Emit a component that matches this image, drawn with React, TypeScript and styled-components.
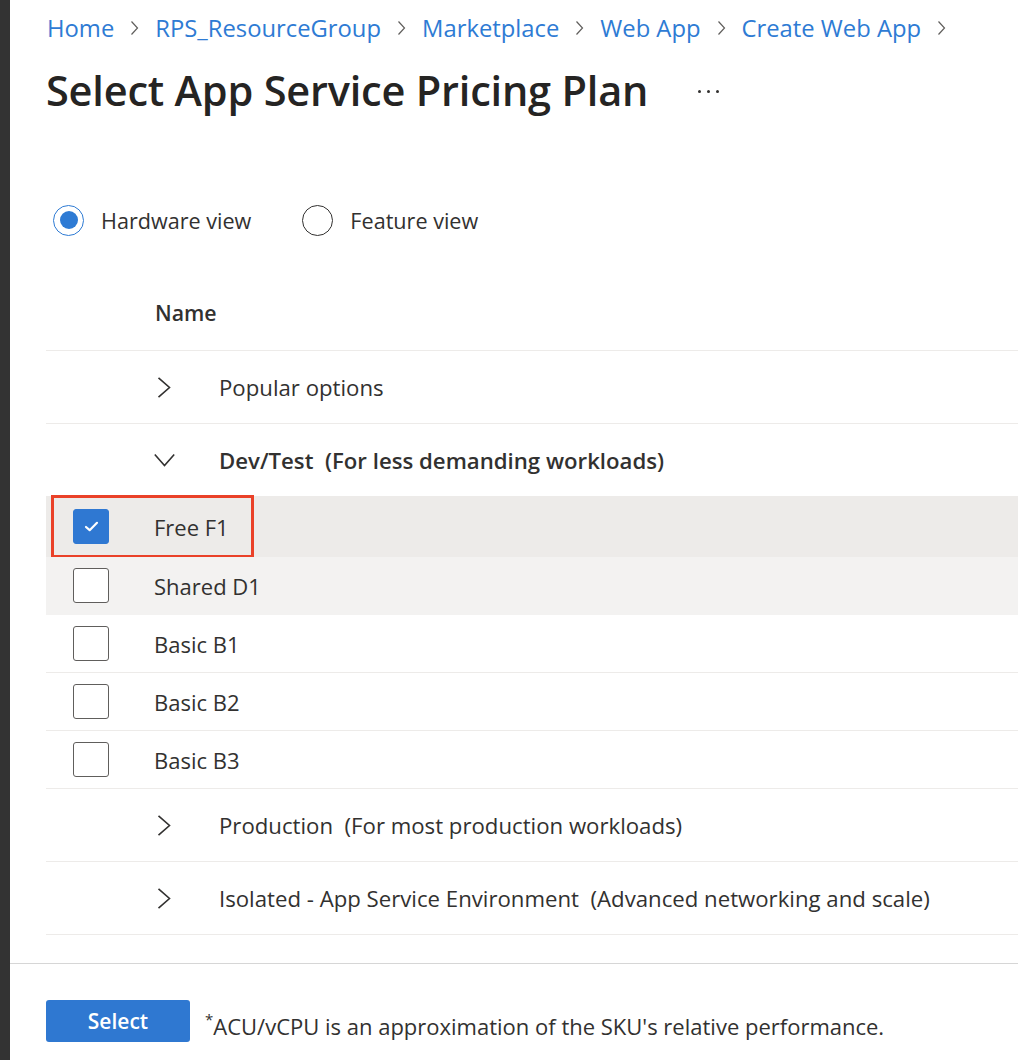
import React from "react";
import styled, { createGlobalStyle } from "styled-components";

const Global = createGlobalStyle`
  html, body { margin: 0; padding: 0; background: #ffffff; }
  body { font-family: "Segoe UI", "Open Sans", "Noto Sans", sans-serif; color: #323130; }
  * { box-sizing: border-box; }
`;

const Page = styled.div`
  display: flex;
  min-height: 1060px;
  width: 1018px;
  overflow: hidden;
`;

const Strip = styled.div`
  width: 10px;
  flex: 0 0 10px;
  background: #333333;
`;

const Main = styled.div`
  flex: 1;
  display: flex;
  flex-direction: column;
  min-width: 0;
`;

const Content = styled.div`
  padding-left: 36px;
  display: flex;
  flex-direction: column;
`;

const Breadcrumb = styled.nav`
  display: flex;
  align-items: center;
  gap: 16px;
  margin-top: 12px;
  height: 32px;
  padding-left: 1px;
  font-size: 23.8px;
  line-height: 32px;
  white-space: nowrap;
`;

const Crumb = styled.a`
  color: #2e7bd4;
  text-decoration: none;
`;

const TitleRow = styled.div`
  display: flex;
  align-items: center;
  margin-top: 20px;
  height: 52px;
`;

const Title = styled.h1`
  margin: 0;
  font-size: 41.5px;
  font-weight: 600;
  line-height: 52px;
  color: #252423;
  letter-spacing: -0.2px;
`;

const More = styled.span`
  margin-left: 50px;
  display: flex;
  gap: 6px;
  align-items: center;
  padding-top: 2px;
`;

const Dot = styled.span`
  width: 3px;
  height: 3px;
  border-radius: 50%;
  background: #323130;
`;

const RadioGroup = styled.div`
  display: flex;
  align-items: center;
  margin: 88px 0 0 7px;
  height: 32px;
`;

const RadioLabel = styled.label`
  display: flex;
  align-items: center;
  gap: 17px;
  margin-right: 51px;
  font-size: 21.6px;
  color: #323130;
`;

const RadioCircle = styled.span<{ $checked?: boolean }>`
  width: 31px;
  height: 31px;
  border-radius: 50%;
  border: 1.5px solid ${(p) => (p.$checked ? "#2e7bd4" : "#323130")};
  display: flex;
  align-items: center;
  justify-content: center;
  &::after {
    content: "";
    width: 18px;
    height: 18px;
    border-radius: 50%;
    background: ${(p) => (p.$checked ? "#2e7bd4" : "transparent")};
  }
`;

const HeaderRow = styled.div`
  height: 76px;
  margin-top: 39px;
  display: flex;
  align-items: center;
  padding-left: 109px;
  font-size: 21.3px;
  font-weight: 600;
  color: #323130;
  border-bottom: 1px solid #edebe9;
`;

const GroupRow = styled.div<{ $bold?: boolean }>`
  height: 73px;
  display: flex;
  align-items: center;
  border-bottom: 1px solid #edebe9;
  font-size: 22.2px;
  font-weight: ${(p) => (p.$bold ? 600 : 400)};
  white-space: pre;
`;

const ChevronCell = styled.span`
  width: 173px;
  flex: 0 0 173px;
  padding-left: 108px;
  display: flex;
  align-items: center;
`;

const ItemRow = styled.div<{ $bg?: string; $h?: number }>`
  position: relative;
  height: ${(p) => p.$h ?? 58}px;
  display: flex;
  align-items: center;
  background: ${(p) => p.$bg ?? "#ffffff"};
  border-bottom: 1px solid ${(p) => (p.$bg ? p.$bg : "#edebe9")};
  font-size: 22px;
`;

const CheckCell = styled.span`
  width: 108px;
  flex: 0 0 108px;
  padding-left: 27px;
  display: flex;
  align-items: center;
`;

const Box = styled.span<{ $checked?: boolean }>`
  width: 36px;
  height: 35px;
  border-radius: 3px;
  border: 1px solid ${(p) => (p.$checked ? "#2f78d2" : "#605e5c")};
  background: ${(p) => (p.$checked ? "#2f78d2" : "#ffffff")};
  display: flex;
  align-items: center;
  justify-content: center;
`;

const Highlight = styled.span`
  position: absolute;
  left: 5px;
  top: -2px;
  width: 203px;
  height: 63px;
  border: 3px solid #ea4128;
  pointer-events: none;
`;

const Footer = styled.div`
  margin-top: 28px;
  border-top: 1px solid #d6d6d6;
  padding: 36px 0 0 36px;
  display: flex;
  align-items: flex-start;
  gap: 15px;
`;

const Button = styled.button`
  width: 144px;
  height: 42px;
  border: none;
  border-radius: 3px;
  background: #2f78d1;
  color: #ffffff;
  font-family: inherit;
  font-size: 21px;
  font-weight: 600;
  padding: 0;
`;

const Note = styled.span`
  font-size: 22px;
  line-height: 30px;
  margin-top: 11px;
  color: #323130;
  white-space: nowrap;
  sup {
    font-size: 15px;
    vertical-align: 10px;
    line-height: 0;
  }
`;

const Sep = () => (
  <svg width="9" height="16" viewBox="0 0 9 16">
    <path d="M1.5 1.5 L7.5 8 L1.5 14.5" fill="none" stroke="#605e5c" strokeWidth="1.2" />
  </svg>
);

const ChevronRight = () => (
  <svg width="21" height="21" viewBox="0 0 21 21">
    <path d="M4.5 0.8 L15.5 10.5 L4.5 20.2" fill="none" stroke="#323130" strokeWidth="1.6" />
  </svg>
);

const ChevronDown = () => (
  <svg width="21" height="21" viewBox="0 0 21 21">
    <path d="M0.8 4.5 L10.5 15.5 L20.2 4.5" fill="none" stroke="#323130" strokeWidth="1.6" />
  </svg>
);

const Check = () => (
  <svg width="15" height="11" viewBox="0 0 16 12">
    <path d="M2 6.5 L6 10 L14 2" fill="none" stroke="#ffffff" strokeWidth="2.4" strokeLinecap="round" strokeLinejoin="round" />
  </svg>
);

const crumbs = ["Home", "RPS_ResourceGroup", "Marketplace", "Web App", "Create Web App"];

const items: { name: string; checked?: boolean; bg?: string; h?: number }[] = [
  { name: "Free F1", checked: true, bg: "#edebe9", h: 60 },
  { name: "Shared D1", bg: "#f3f2f1" },
  { name: "Basic B1" },
  { name: "Basic B2" },
  { name: "Basic B3" },
];

export default function App() {
  return (
    <>
      <Global />
      <Page>
        <Strip />
        <Main>
          <Content>
            <Breadcrumb>
              {crumbs.map((c) => (
                <React.Fragment key={c}>
                  <Crumb href="#">{c}</Crumb>
                  <Sep />
                </React.Fragment>
              ))}
            </Breadcrumb>
            <TitleRow>
              <Title>Select App Service Pricing Plan</Title>
              <More>
                <Dot />
                <Dot />
                <Dot />
              </More>
            </TitleRow>
            <RadioGroup>
              <RadioLabel>
                <RadioCircle $checked />
                Hardware view
              </RadioLabel>
              <RadioLabel>
                <RadioCircle />
                Feature view
              </RadioLabel>
            </RadioGroup>
            <HeaderRow>Name</HeaderRow>
            <GroupRow>
              <ChevronCell>
                <ChevronRight />
              </ChevronCell>
              Popular options
            </GroupRow>
            <GroupRow $bold>
              <ChevronCell>
                <ChevronDown />
              </ChevronCell>
              {"Dev/Test  (For less demanding workloads)"}
            </GroupRow>
            {items.map((it) => (
              <ItemRow key={it.name} $bg={it.bg} $h={it.h}>
                <CheckCell>
                  <Box $checked={it.checked}>{it.checked && <Check />}</Box>
                </CheckCell>
                {it.name}
                {it.checked && <Highlight />}
              </ItemRow>
            ))}
            <GroupRow>
              <ChevronCell>
                <ChevronRight />
              </ChevronCell>
              {"Production  (For most production workloads)"}
            </GroupRow>
            <GroupRow>
              <ChevronCell>
                <ChevronRight />
              </ChevronCell>
              {"Isolated - App Service Environment  (Advanced networking and scale)"}
            </GroupRow>
          </Content>
          <Footer>
            <Button>Select</Button>
            <Note>
              <sup>*</sup>ACU/vCPU is an approximation of the SKU's relative performance.
            </Note>
          </Footer>
        </Main>
      </Page>
    </>
  );
}
